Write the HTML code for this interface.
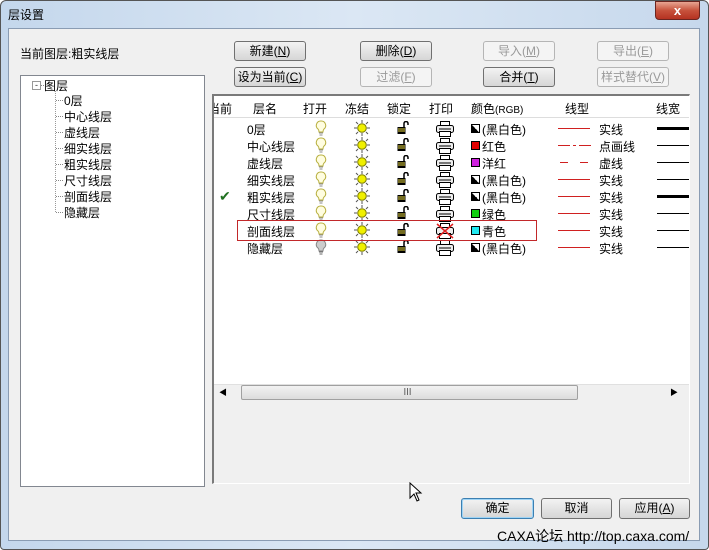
<!DOCTYPE html><html><head><meta charset="utf-8"><style>
*{margin:0;padding:0;box-sizing:border-box}
body{width:709px;height:550px;position:relative;overflow:hidden;background:#fff;font-family:"Liberation Sans","Noto Sans CJK SC",sans-serif;font-size:12px;color:#000}
.a{position:absolute}
.win{left:0;top:0;width:709px;height:550px;background:linear-gradient(90deg,#c4d7ec,#dbe7f4 50%,#c6d8ec);border:1px solid #555;border-radius:6px 6px 4px 4px}
.cl{left:8px;top:28px;width:692px;height:513px;background:#f0f0f0;border:1px solid #8a9cb3}
.btn{position:absolute;height:20px;border:1px solid #707070;border-radius:3px;background:linear-gradient(#f3f3f3,#e4e4e4 50%,#d6d6d6);text-align:center;line-height:18px;font-size:12px}
.dis{color:#9a9a9a;border-color:#b5b5b5;background:#f4f4f4}
.t{position:absolute;white-space:nowrap}
.row{position:absolute;left:0;height:17px;width:476px}
.ti{position:absolute;left:64px;white-space:nowrap}
.td{position:absolute;left:56px;width:7px;border-top:1px dotted #888}
</style></head><body>
<div class="a win"></div>
<div class="t" style="left:8px;top:6px;font-size:12px">层设置</div>
<div class="a" style="left:655px;top:1px;width:45px;height:19px;border:1px solid #6b2520;border-radius:0 0 4px 4px;background:linear-gradient(#e8a592,#c7523c 50%,#b53221);color:#fff;text-align:center;font-weight:bold;line-height:17px;font-size:13px">x</div>
<div class="a cl"></div>
<div class="t" style="left:20px;top:45px">当前图层:粗实线层</div>
<div class="a" style="left:20px;top:75px;width:185px;height:412px;background:#fff;border:1px solid #828790"></div>
<div class="a" style="left:32px;top:81px;width:9px;height:9px;border:1px solid #999;font-size:9px;line-height:6px;text-align:center;color:#333">-</div>
<div class="a" style="left:41px;top:85px;width:3px;border-top:1px dotted #888"></div>
<div class="t" style="left:44px;top:77px">图层</div>
<div class="a" style="left:55px;top:91px;width:0;height:121px;border-left:1px dotted #999"></div>
<div class="td" style="top:100px"></div><div class="ti" style="top:92px">0层</div>
<div class="td" style="top:116px"></div><div class="ti" style="top:108px">中心线层</div>
<div class="td" style="top:132px"></div><div class="ti" style="top:124px">虚线层</div>
<div class="td" style="top:148px"></div><div class="ti" style="top:140px">细实线层</div>
<div class="td" style="top:164px"></div><div class="ti" style="top:156px">粗实线层</div>
<div class="td" style="top:180px"></div><div class="ti" style="top:172px">尺寸线层</div>
<div class="td" style="top:196px"></div><div class="ti" style="top:188px">剖面线层</div>
<div class="td" style="top:212px"></div><div class="ti" style="top:204px">隐藏层</div>
<div class="btn" style="left:234px;top:41px;width:72px">新建(<u>N</u>)</div>
<div class="btn" style="left:360px;top:41px;width:72px">删除(<u>D</u>)</div>
<div class="btn dis" style="left:483px;top:41px;width:72px">导入(<u>M</u>)</div>
<div class="btn dis" style="left:597px;top:41px;width:72px">导出(<u>E</u>)</div>
<div class="btn" style="left:234px;top:67px;width:72px">设为当前(<u>C</u>)</div>
<div class="btn dis" style="left:360px;top:67px;width:72px">过滤(<u>F</u>)</div>
<div class="btn" style="left:483px;top:67px;width:72px">合并(<u>T</u>)</div>
<div class="btn dis" style="left:597px;top:67px;width:72px">样式替代(<u>V</u>)</div>
<div class="a" style="left:212px;top:94px;width:478px;height:390px;border-left:2px solid #7a7a7a;border-top:2px solid #7a7a7a;border-right:1px solid #fff;border-bottom:1px solid #fff"></div>
<div class="a" style="left:214px;top:96px;width:475px;height:288px;background:#fff;overflow:hidden">
<div class="a" style="left:0;top:0;width:476px;height:22px;border-bottom:1px solid #ddd"></div>
<div class="t" style="left:-6px;top:4px">当前</div><div class="t" style="left:39px;top:4px">层名</div><div class="t" style="left:89px;top:4px">打开</div><div class="t" style="left:131px;top:4px">冻结</div><div class="t" style="left:173px;top:4px">锁定</div><div class="t" style="left:215px;top:4px">打印</div><div class="t" style="left:257px;top:4px">颜色<span style="font-size:10px">(RGB)</span></div><div class="t" style="left:351px;top:4px">线型</div><div class="t" style="left:442px;top:4px">线宽</div>
<div id="rows"></div>
</div>
<div class="a" style="left:237px;top:220px;width:300px;height:21px;border:1px solid #c2282a"></div>
<div class="a" style="left:214px;top:384px;width:475px;height:17px;background:#f0f0f0;border-top:1px solid #e0e0e0"></div>
<div class="t" style="left:219px;top:387px;font-size:8px">◀</div>
<div class="a" style="left:241px;top:385px;width:337px;height:15px;border:1px solid #a0a0a0;border-radius:2px;background:linear-gradient(#f2f2f2,#dcdcdc)"></div>
<div class="t" style="left:403px;top:385px;font-size:9px;color:#555">Ⅲ</div>
<div class="t" style="left:670px;top:387px;font-size:8px">▶</div>
<svg class="a" style="left:409px;top:482px" width="14" height="20"><path d="M1 1 L1 16 L5 12 L8 19 L10 18 L7 11 L12 11 Z" fill="#fff" stroke="#000"/></svg>
<div class="btn" style="left:461px;top:498px;width:73px;height:21px;border-color:#3c7fb1;box-shadow:inset 0 0 0 1px #9fd4f5">确定</div>
<div class="btn" style="left:541px;top:498px;width:71px;height:21px">取消</div>
<div class="btn" style="left:619px;top:498px;width:71px;height:21px">应用(<u>A</u>)</div>
<div class="t" style="left:497px;top:526px;font-size:14px">CAXA论坛 http://top.caxa.com/</div>
<script>
var names=["0层","中心线层","虚线层","细实线层","粗实线层","尺寸线层","剖面线层","隐藏层"];
var cols=[["#fff","(黑白色)",1],["#e00000","红色"],["#d020e0","洋红"],["#fff","(黑白色)",1],["#fff","(黑白色)",1],["#10d010","绿色"],["#20e8f0","青色"],["#fff","(黑白色)",1]];
var lt=["实线","点画线","虚线","实线","实线","实线","实线","实线"];
var bulb='<svg width="12" height="16"><path d="M6 1a4.5 4.5 0 0 0-3 8c1 1 1 2 1 3h4c0-1 0-2 1-3a4.5 4.5 0 0 0-3-8z" fill="#fffde0" stroke="#b8b040"/><path d="M4 13h4M4.5 15h3" stroke="#888"/></svg>';
var bulbg='<svg width="12" height="16"><path d="M6 1a4.5 4.5 0 0 0-3 8c1 1 1 2 1 3h4c0-1 0-2 1-3a4.5 4.5 0 0 0-3-8z" fill="#ccc" stroke="#888"/><path d="M4 13h4M4.5 15h3" stroke="#666"/></svg>';
var sun='<svg width="16" height="16"><g stroke="#555" stroke-width="1"><path d="M8 0v3M8 13v3M0 8h3M13 8h3M2 2l2 2M12 12l2 2M2 14l2-2M12 4l2-2"/></g><circle cx="8" cy="8" r="4.3" fill="#f0f000" stroke="#7a7a00"/></svg>';
var lock='<svg width="12" height="14"><path d="M7 6V2.5a2 2 0 0 1 4 0V4" fill="none" stroke="#000" stroke-width="1.5"/><rect x="0.5" y="6" width="8" height="7" fill="#000"/><path d="M1 8h7M1 10h7" stroke="#e8d840"/></svg>';
var pr='<svg width="18" height="16"><rect x="4.5" y="0.5" width="9" height="4" fill="#fff" stroke="#000"/><rect x="0.5" y="4.5" width="17" height="7" rx="2" fill="#eee" stroke="#000"/><rect x="3.5" y="10.5" width="11" height="5" fill="#fff" stroke="#000"/><path d="M3 8h12" stroke="#000"/></svg>';
var prx='<svg width="18" height="16"><rect x="4.5" y="0.5" width="9" height="4" fill="#fff" stroke="#000"/><rect x="0.5" y="4.5" width="17" height="7" rx="2" fill="#eee" stroke="#000"/><rect x="3.5" y="10.5" width="11" height="5" fill="#fff" stroke="#000"/><path d="M1 1L17 15M17 1L1 15" stroke="#e02020" stroke-width="1.5"/></svg>';
var h="";
for(var i=0;i<8;i++){var y=24+i*17;
h+='<div class="row" style="top:'+y+'px">';
if(i==4)h+='<div class="t" style="left:5px;top:0;color:#207020;font-size:14px">✔</div>';
h+='<div class="t" style="left:33px;top:1px">'+names[i]+'</div>';
h+='<div class="a" style="left:101px;top:0">'+(i==7?bulbg:bulb)+'</div>';
h+='<div class="a" style="left:140px;top:0">'+sun+'</div>';
h+='<div class="a" style="left:183px;top:1px">'+lock+'</div>';
h+='<div class="a" style="left:222px;top:1px">'+(i==6?prx:pr)+'</div>';
var c=cols[i];
h+='<div class="a" style="left:257px;top:4px;width:9px;height:9px;border:1px solid #000;background:'+(c[2]?'linear-gradient(45deg,#000 50%,#fff 50%)':c[0])+'"></div>';
h+='<div class="t" style="left:268px;top:1px">'+c[1]+'</div>';
if(i==2)h+='<div class="a" style="left:346px;top:8px;width:8px;border-top:1px solid #d02020"></div><div class="a" style="left:366px;top:8px;width:8px;border-top:1px solid #d02020"></div>';
else if(i==1)h+='<div class="a" style="left:344px;top:8px;width:12px;border-top:1px solid #d02020"></div><div class="a" style="left:359px;top:8px;width:3px;border-top:1px solid #d02020"></div><div class="a" style="left:365px;top:8px;width:12px;border-top:1px solid #d02020"></div>';
else h+='<div class="a" style="left:344px;top:8px;width:32px;border-top:1px solid #d02020"></div>';
h+='<div class="t" style="left:385px;top:1px">'+lt[i]+'</div>';
h+='<div class="a" style="left:443px;top:'+((i==0||i==4)?7:8)+'px;width:32px;border-top:'+((i==0||i==4)?3:1)+'px solid #000"></div>';
h+='</div>';}
document.getElementById("rows").innerHTML=h;
</script>
</body></html>
